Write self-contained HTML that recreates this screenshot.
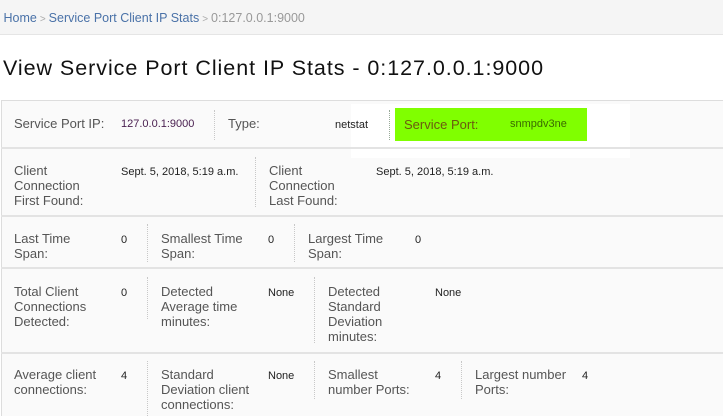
<!DOCTYPE html>
<html><head><meta charset="utf-8"><style>
html,body{margin:0;width:723px;height:416px;overflow:hidden}
body{background:#fff;font-family:"Liberation Sans",sans-serif;position:relative}
.bc{position:absolute;left:0;top:0;width:723px;height:34px;background:#f5f5f5;border-bottom:1px solid #e5e5e5;font-size:12.5px;line-height:36px;color:#999;white-space:nowrap}
.bc span{color:#4a72a8}
.bc .s{color:#aaa;font-size:10px;margin:0 3px}
h1{position:absolute;left:3px;top:56px;margin:0;font-weight:normal;font-size:21.5px;color:#111;letter-spacing:0.95px;white-space:nowrap}
.tbl{position:absolute;left:1px;top:100px;width:730px;height:330px;background:#fafafa;border:1px solid #ddd}
.h{position:absolute;left:1px;width:722px;height:0;border-top:2px solid #e3e3e3}
.v{position:absolute;width:0;border-left:1px dotted #c8c8c8}
.l{position:absolute;font-size:13px;line-height:15px;color:#555}
.d{position:absolute;font-size:11px;line-height:15px;color:#222}
</style></head><body>
<div class="bc">&nbsp;<span>Home</span><span class="s">&gt;</span><span>Service Port Client IP Stats</span><span class="s">&gt;</span>0:127.0.0.1:9000</div>
<h1>View Service Port Client IP Stats - 0:127.0.0.1:9000</h1>
<div class="tbl"></div>
<div style="position:absolute;left:351px;top:104px;width:279px;height:54px;background:#fff"></div>
<div style="position:absolute;left:395px;top:108px;width:192px;height:33px;background:#80ff00"></div>
<div class="h" style="top:147px"></div>
<div class="h" style="top:215px"></div>
<div class="h" style="top:267px"></div>
<div class="h" style="top:352px"></div>

<div class="l" style="left:14px;top:116px">Service Port IP:</div>
<div class="d" style="left:121px;top:117px;color:#4a2050">127.0.0.1:9000</div>
<div class="v" style="left:214px;top:110px;height:30px"></div>
<div class="l" style="left:228px;top:116px">Type:</div>
<div class="d" style="left:335px;top:118px">netstat</div>
<div class="v" style="left:389px;top:110px;height:30px;border-color:#9a9"></div>
<div class="l" style="left:404px;top:117px;color:#6b5a10">Service Port:</div>
<div class="d" style="left:510px;top:117px;color:#3a6a00">snmpdv3ne</div>

<div class="l" style="left:14px;top:163px">Client<br>Connection<br>First Found:</div>
<div class="d" style="left:121px;top:165px">Sept. 5, 2018, 5:19 a.m.</div>
<div class="v" style="left:255px;top:157px;height:50px"></div>
<div class="l" style="left:269px;top:163px">Client<br>Connection<br>Last Found:</div>
<div class="d" style="left:376px;top:165px">Sept. 5, 2018, 5:19 a.m.</div>

<div class="l" style="left:14px;top:231px">Last Time<br>Span:</div>
<div class="d" style="left:121px;top:233px">0</div>
<div class="v" style="left:147px;top:224px;height:38px"></div>
<div class="l" style="left:161px;top:231px">Smallest Time<br>Span:</div>
<div class="d" style="left:268px;top:233px">0</div>
<div class="v" style="left:294px;top:224px;height:38px"></div>
<div class="l" style="left:308px;top:231px">Largest Time<br>Span:</div>
<div class="d" style="left:415px;top:233px">0</div>

<div class="l" style="left:14px;top:284px">Total Client<br>Connections<br>Detected:</div>
<div class="d" style="left:121px;top:286px">0</div>
<div class="v" style="left:147px;top:277px;height:42px"></div>
<div class="l" style="left:161px;top:284px">Detected<br>Average time<br>minutes:</div>
<div class="d" style="left:268px;top:286px">None</div>
<div class="v" style="left:314px;top:277px;height:66px"></div>
<div class="l" style="left:328px;top:284px">Detected<br>Standard<br>Deviation<br>minutes:</div>
<div class="d" style="left:435px;top:286px">None</div>

<div class="l" style="left:14px;top:367px">Average client<br>connections:</div>
<div class="d" style="left:121px;top:369px">4</div>
<div class="v" style="left:147px;top:361px;height:55px"></div>
<div class="l" style="left:161px;top:367px">Standard<br>Deviation client<br>connections:</div>
<div class="d" style="left:268px;top:369px">None</div>
<div class="v" style="left:314px;top:361px;height:38px"></div>
<div class="l" style="left:328px;top:367px">Smallest<br>number Ports:</div>
<div class="d" style="left:435px;top:369px">4</div>
<div class="v" style="left:461px;top:361px;height:38px"></div>
<div class="l" style="left:475px;top:367px">Largest number<br>Ports:</div>
<div class="d" style="left:582px;top:369px">4</div>
</body></html>
